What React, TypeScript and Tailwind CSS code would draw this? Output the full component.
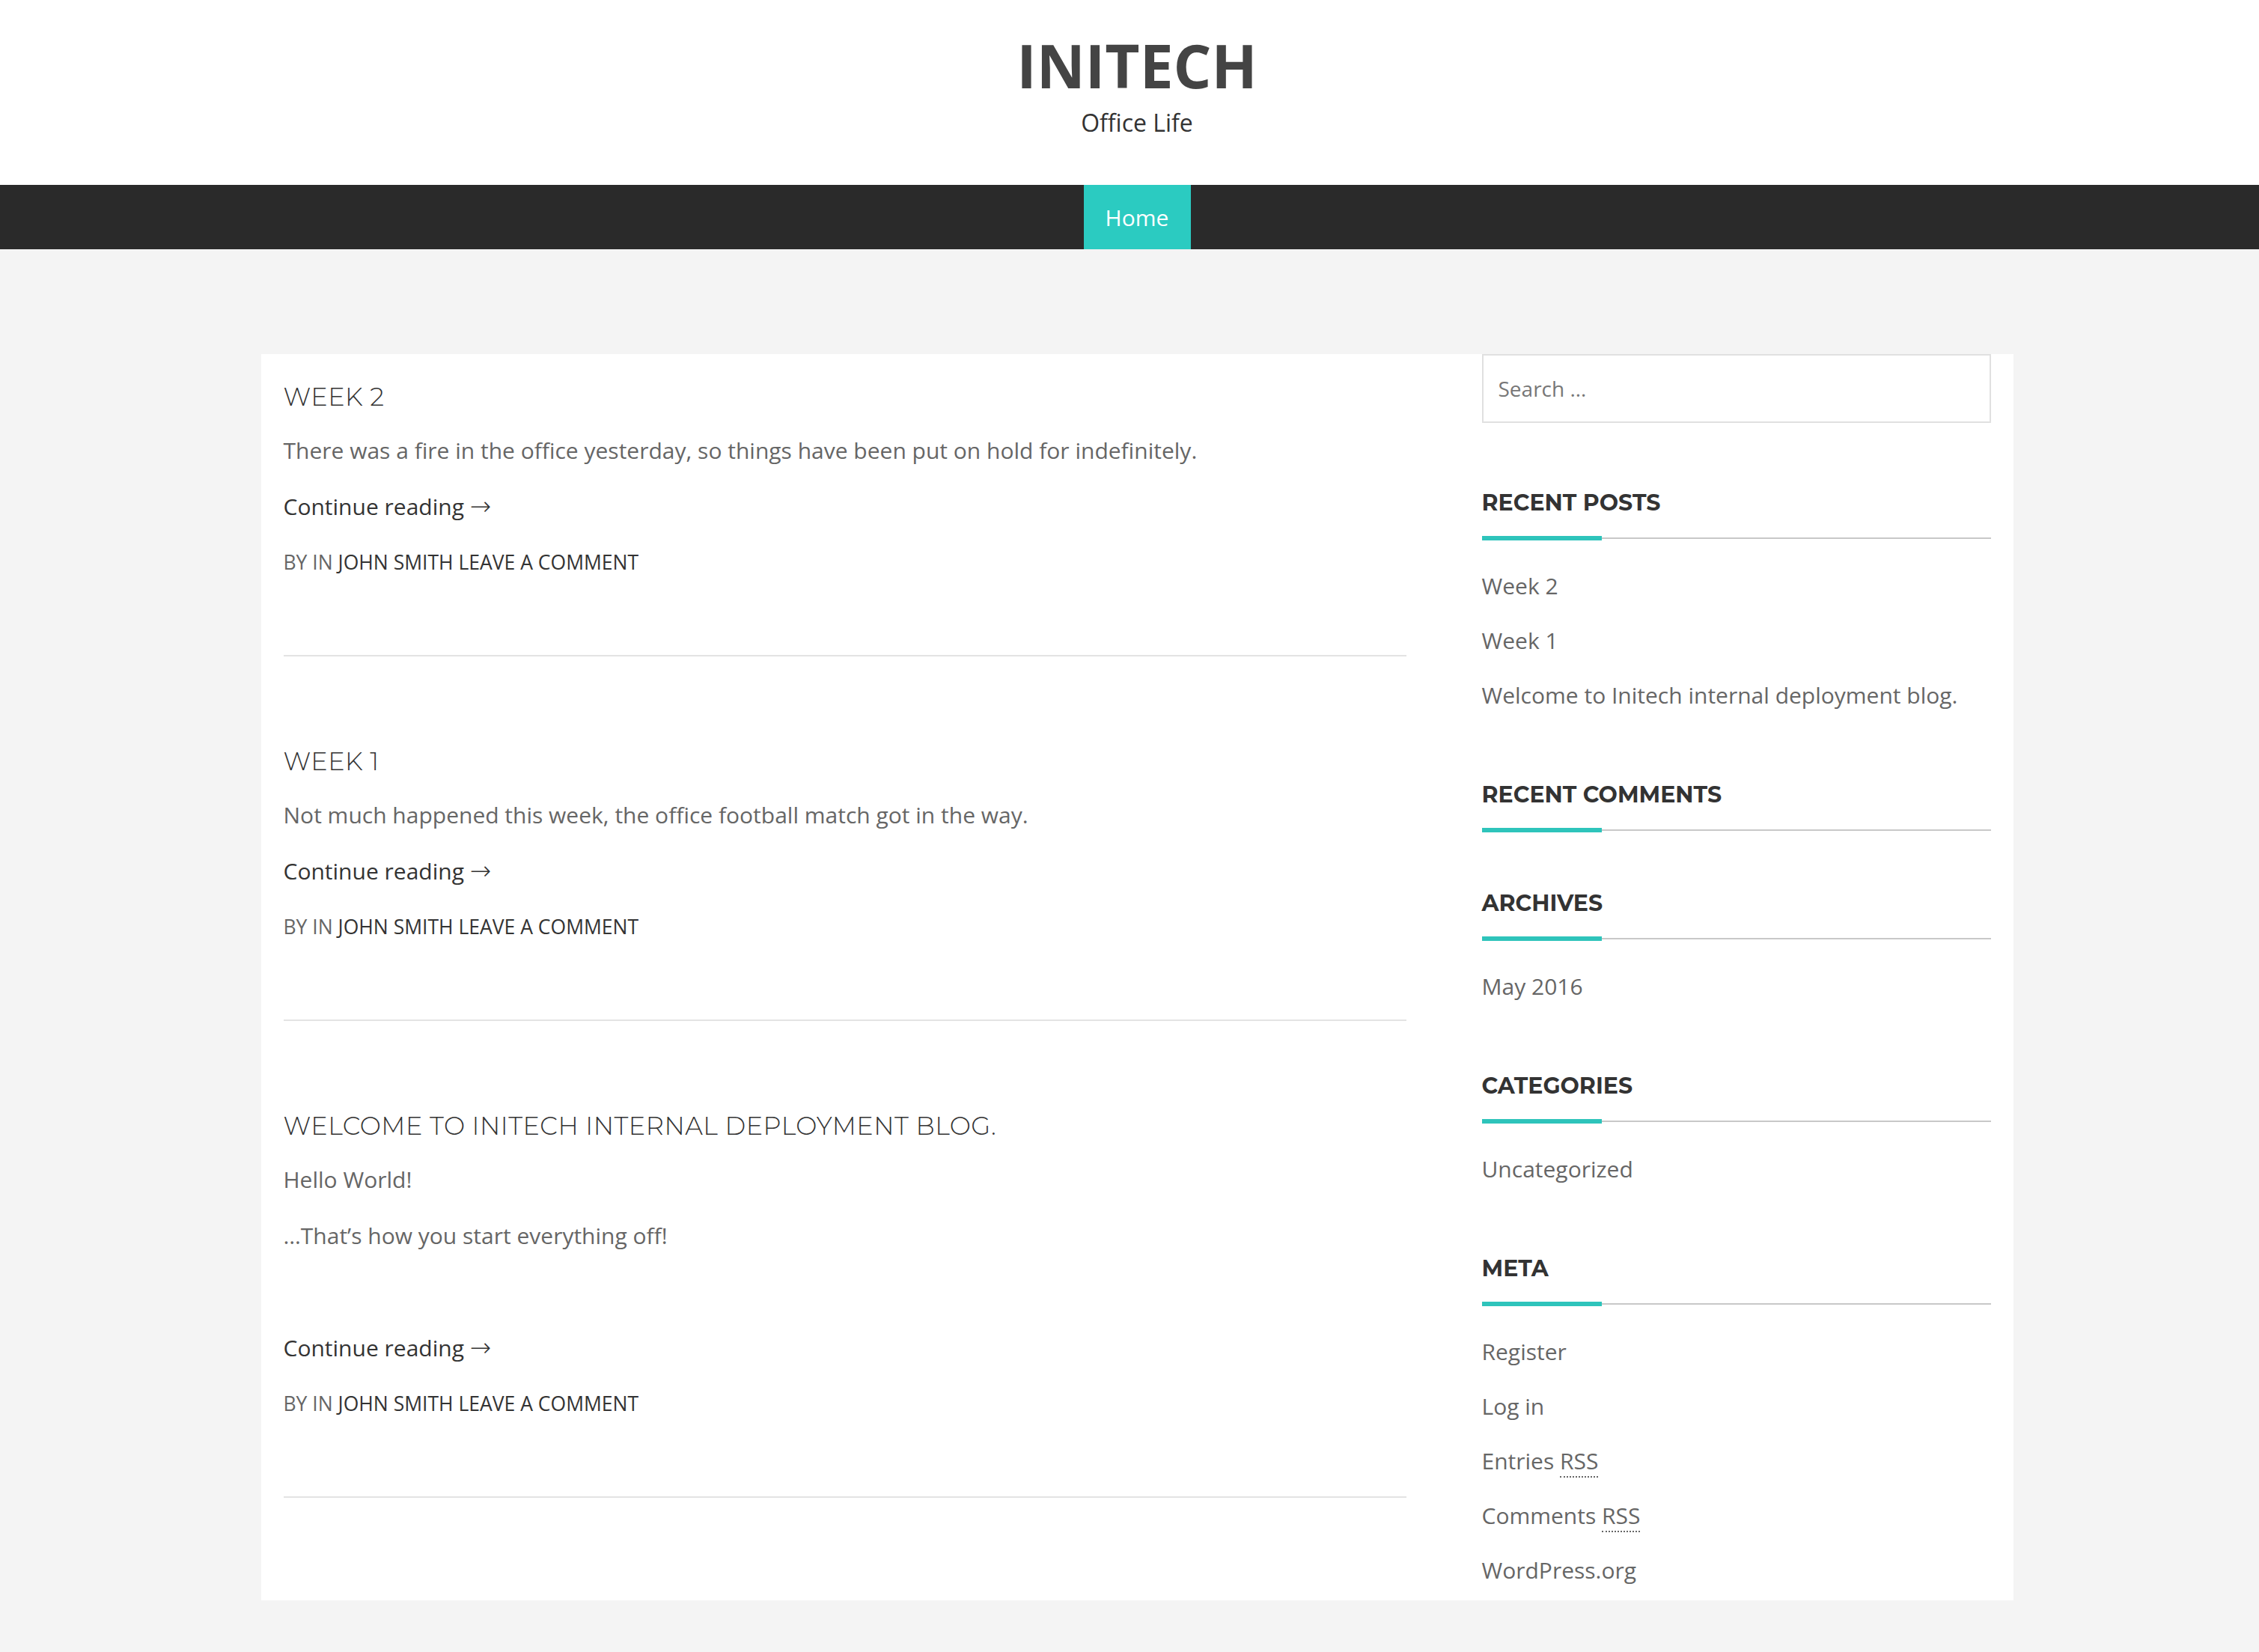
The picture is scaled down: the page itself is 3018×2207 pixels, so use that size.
import React from 'react';

interface Post {
    title: string;
    paragraphs: string[];
    extraGap?: boolean;
}

const POSTS: Post[] = [
    {
        title: 'Week 2',
        paragraphs: ['There was a fire in the office yesterday, so things have been put on hold for indefinitely.'],
    },
    {
        title: 'Week 1',
        paragraphs: ['Not much happened this week, the office football match got in the way.'],
    },
    {
        title: 'Welcome to Initech internal deployment blog.',
        paragraphs: ['Hello World!', '…That’s how you start everything off!'],
        extraGap: true,
    },
];

const WIDGETS: { title: string; items: React.ReactNode[] }[] = [
    { title: 'Recent Posts', items: ['Week 2', 'Week 1', 'Welcome to Initech internal deployment blog.'] },
    { title: 'Recent Comments', items: [] },
    { title: 'Archives', items: ['May 2016'] },
    { title: 'Categories', items: ['Uncategorized'] },
    {
        title: 'Meta',
        items: [
            'Register',
            'Log in',
            <>Entries <abbr className="no-underline border-b-2 border-dotted border-[#666]">RSS</abbr></>,
            <>Comments <abbr className="no-underline border-b-2 border-dotted border-[#666]">RSS</abbr></>,
            'WordPress.org',
        ],
    },
];

const heading = "font-['Montserrat','Inter','Liberation_Sans',sans-serif]";

const PostItem: React.FC<{ post: Post; first: boolean }> = ({ post, first }) => (
    <article className={first ? '' : 'mt-[118px]'}>
        <h2 className={`${heading} font-light uppercase text-[33.5px] leading-[45px] text-[#333] tracking-[0.5px] mb-[26px]`}>
            {post.title}
        </h2>
        {post.paragraphs.map((p, i) => (
            <p key={i} className="text-[30px] leading-[45px] text-[#666] mb-[30px]">{p}</p>
        ))}
        {post.extraGap && <div className="h-[75px]" />}
        <p className="h-[45px] text-[30px] leading-[45px] text-[#333] mb-[30px] overflow-hidden">
            <a href="#">
                Continue reading <span className="font-['DejaVu_Sans',sans-serif] font-extralight text-[34px] leading-none">→</span>
            </a>
        </p>
        <div className="h-[45px] text-[26.5px] leading-[45px] uppercase text-[#666]">
            By In <span className="text-[#333]">John Smith</span> <span className="text-[#333]">Leave a comment</span>
        </div>
        <hr className="mt-[101px] border-0 h-[2px] bg-[#e3e3e3]" />
    </article>
);

const Widget: React.FC<{ title: string; items: React.ReactNode[]; last: boolean }> = ({ title, items, last }) => (
    <section className={last ? '' : items.length ? 'mb-[88px]' : 'mb-[72px]'}>
        <h3 className={`${heading} font-bold uppercase text-[30px] leading-[45px] text-[#333] mt-0`}>{title}</h3>
        <div className="mt-[22px] h-[6px] flex items-center relative">
            <div className="w-full h-[2px] bg-[#c8c8c8]" />
            <div className="absolute left-0 top-0 w-[160px] h-[6px] bg-[#2ec4bb]" />
        </div>
        {items.length > 0 && (
            <ul className="mt-[38px] flex flex-col gap-[28px]">
                {items.map((item, i) => (
                    <li key={i} className="text-[30px] leading-[45px] text-[#666]">{item}</li>
                ))}
            </ul>
        )}
    </section>
);

export default function App() {
    return (
        <div className="min-h-screen bg-[#f4f4f4] font-['Open_Sans',sans-serif]">
            <header className="bg-white h-[247px] pl-[20px] flex flex-col items-center pt-[43px]">
                <h1 className="text-[80px] leading-[88px] font-bold text-[#444]">INITECH</h1>
                <p className="text-[32px] leading-[45px] text-[#333] mt-[10px]">Office Life</p>
            </header>
            <nav className="bg-[#2a2a2a] h-[86px] pl-[20px] flex justify-center">
                <a href="#" className="bg-[#2bcbc1] w-[143px] flex items-center justify-center text-white text-[30px]">
                    Home
                </a>
            </nav>
            <div className="pl-[20px] pt-[140px] pb-[71px]">
                <div className="w-[2341px] mx-auto bg-white flex items-start">
                    <main className="w-[1560px] px-[30px] pt-[35px] pb-[137px]">
                        {POSTS.map((post, i) => (
                            <PostItem key={i} post={post} first={i === 0} />
                        ))}
                    </main>
                    <aside className="w-[781px] pl-[71px] pr-[30px] pb-[14px]">
                        <div className="h-[92px] border-2 border-[#e0e0e0] flex items-center px-[20px] text-[28px] text-[#777] mb-[84px]">
                            Search …
                        </div>
                        {WIDGETS.map((w, i) => (
                            <Widget key={i} title={w.title} items={w.items} last={i === WIDGETS.length - 1} />
                        ))}
                    </aside>
                </div>
            </div>
            <footer className="bg-[#222] h-[20px]" />
        </div>
    );
}
